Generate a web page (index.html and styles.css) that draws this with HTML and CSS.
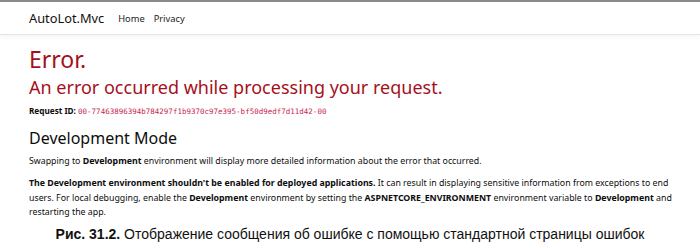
FILE: index.html
```html
<!doctype html>
<html>

<head>
    <meta charset="UTF-8">
    <title>Error - AutoLot.Mvc</title>
    <link rel="stylesheet" href="styles.css">
</head>

<body>
    <div class="shot">
        <header class="navbar">
            <a class="brand" href="#">AutoLot.Mvc</a>
            <a class="nav-link" href="#">Home</a>
            <a class="nav-link" href="#">Privacy</a>
        </header>

        <main class="content">
            <h1 class="text-danger">Error.</h1>
            <h2 class="text-danger">An error occurred while processing your request.</h2>

            <p class="request-id">
                <strong>Request ID:</strong> <code>00-77463896394b784297f1b9370c97e395-bf50d9edf7d11d42-00</code>
            </p>

            <h3>Development Mode</h3>
            <p class="swap">
                Swapping to <strong>Development</strong> environment will display more detailed information about the error that occurred.
            </p>
            <p class="warn">
                <strong>The Development environment shouldn't be enabled for deployed applications.</strong>
                It can result in displaying sensitive information from exceptions to end users.
                For local debugging, enable the <strong>Development</strong> environment by setting the
                <strong>ASPNETCORE_ENVIRONMENT</strong> environment variable to <strong>Development</strong>
                and restarting the app.
            </p>
        </main>
    </div>

    <p class="caption"><b>Рис. 31.2.</b> Отображение сообщения об ошибке с помощью стандартной страницы ошибок</p>
</body>

</html>
```

FILE: styles.css
```css
html {
    --danger: #a5101c;
    --text: #0d0d0d;
    --nav-text: #222;
}
body {
    margin: 0;
    width: 700px;
    height: 248px;
    overflow: hidden;
    background: #fff;
    color: var(--text);
    font-family: "Noto Sans", "Open Sans", sans-serif;
}
.shot {
    border-top: 2px solid #8a8a8a;
}
.navbar {
    display: flex;
    align-items: center;
    height: 32px;
    padding: 0 0 0 29px;
    border-bottom: 1px solid #e4e4e4;
    box-shadow: 0 3px 5px rgba(0, 0, 0, 0.04);
}
.navbar a {
    text-decoration: none;
    color: var(--nav-text);
}
.brand {
    font-size: 12.8px;
    color: #111 !important;
    margin-right: 14px;
}
.nav-link {
    font-size: 9.3px;
    margin-right: 9px;
}
.content {
    padding: 0 25px 0 29px;
}
h1, h2, h3, p {
    margin: 0;
    font-weight: normal;
}
.text-danger {
    color: var(--danger);
}
h1 {
    font-size: 23px;
    line-height: 28px;
    margin-top: 10px;
}
h2 {
    font-size: 18px;
    line-height: 22px;
    margin-top: 3px;
}
.request-id {
    font-size: 8.2px;
    line-height: 12px;
    margin-top: 7px;
}
.request-id code {
    font-family: "DejaVu Sans Mono", monospace;
    font-size: 7.5px;
    color: #c7254e;
}
h3 {
    font-size: 16px;
    line-height: 20px;
    margin-top: 10px;
}
.swap {
    font-size: 8.8px;
    line-height: 12px;
    margin-top: 7px;
}
.warn {
    font-size: 8.8px;
    line-height: 14.5px;
    margin-top: 9px;
}
.caption {
    margin: 6px 0 0;
    text-align: center;
    font-family: "Liberation Sans", Arial, sans-serif;
    font-size: 14px;
    line-height: 16px;
    color: #111;
}
```
